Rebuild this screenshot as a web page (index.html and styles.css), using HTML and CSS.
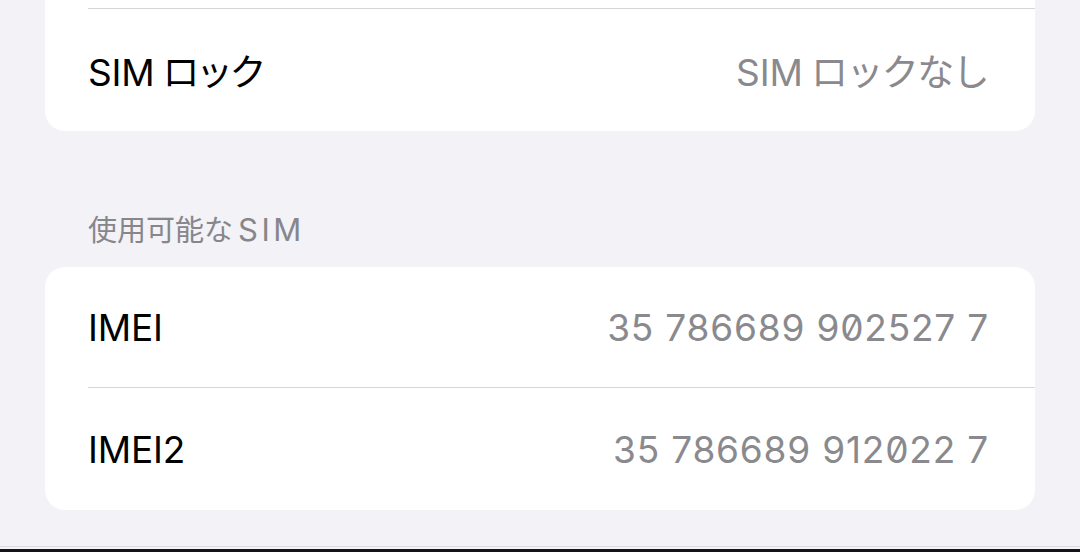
FILE: index.html
```html
<!DOCTYPE html>
<html lang="ja">
<head>
<meta charset="utf-8">
<title>SIM</title>
<link rel="stylesheet" href="styles.css">
</head>
<body>
<div class="page">
  <div class="content">
    <div class="card card-top">
      <div class="stub"></div>
      <div class="row row-a">
        <span class="label"><span class="latin">SIM</span><span class="kana kana-tight">ロック</span></span>
        <span class="value"><span class="latin">SIM</span><span class="kana">ロックなし</span></span>
      </div>
    </div>
    <div class="section-header">使用可能な<span class="header-latin">SIM</span></div>
    <div class="card card-bottom">
      <div class="row row-b sep">
        <span class="label">IMEI</span>
        <span class="value num">35 786689 902527 7</span>
      </div>
      <div class="row row-c">
        <span class="label">IMEI2</span>
        <span class="value num">35 786689 912022 7</span>
      </div>
    </div>
  </div>
  <div class="bottom-edge">
    <div class="edge-line"></div>
    <div class="edge-gap"></div>
    <div class="edge-dark"></div>
  </div>
</div>
</body>
</html>
```

FILE: styles.css
```css
html, body {
  margin: 0;
  padding: 0;
}

body {
  background: #f2f2f7;
  font-family: Inter, "Noto Sans CJK JP", sans-serif;
  -webkit-font-smoothing: antialiased;
}

.page {
  height: 552px;
  display: flex;
  flex-direction: column;
  overflow: hidden;
}

.content {
  flex: 1;
  display: flex;
  flex-direction: column;
}

.card {
  background: #ffffff;
  margin: 0 45px;
  border-radius: 20px;
}

.card-top {
  border-radius: 0 0 20px 20px;
}

.stub {
  height: 8px;
  margin-left: 43px;
  border-bottom: 1px solid #d6d6da;
}

.row {
  display: flex;
  align-items: center;
  justify-content: space-between;
  padding: 0 47px 0 43px;
  position: relative;
}

.row-a {
  height: 122px;
}

.row-b {
  height: 120px;
  margin-bottom: 1px;
}

.row-c {
  height: 122px;
}

.sep::after {
  content: "";
  position: absolute;
  left: 43px;
  right: 0;
  bottom: -1px;
  height: 1px;
  background: #d6d6da;
}

.label {
  font-size: 37px;
  color: #000000;
  letter-spacing: -0.2px;
}

.value {
  font-size: 37px;
  color: #8a8a8e;
}

.latin {
  margin-right: 8px;
}

.kana {
  letter-spacing: -1.6px;
}

.kana-tight {
  letter-spacing: -3.5px;
}

.num {
  font-feature-settings: "zero" 1;
  letter-spacing: 0.8px;
  margin-right: -1px;
}

.section-header {
  font-size: 29px;
  line-height: 36px;
  color: #86868b;
  padding: 81px 0 0 88px;
  height: 36px;
  margin-bottom: 19px;
}

.header-latin {
  font-size: 31px;
  margin-left: 5px;
  letter-spacing: 3.5px;
}

.bottom-edge {
  display: flex;
  flex-direction: column;
}

.edge-line {
  height: 1px;
  background: #dcdce0;
}

.edge-gap {
  height: 2px;
  background: #f2f2f7;
}

.edge-dark {
  height: 3px;
  background: #141416;
}
```
